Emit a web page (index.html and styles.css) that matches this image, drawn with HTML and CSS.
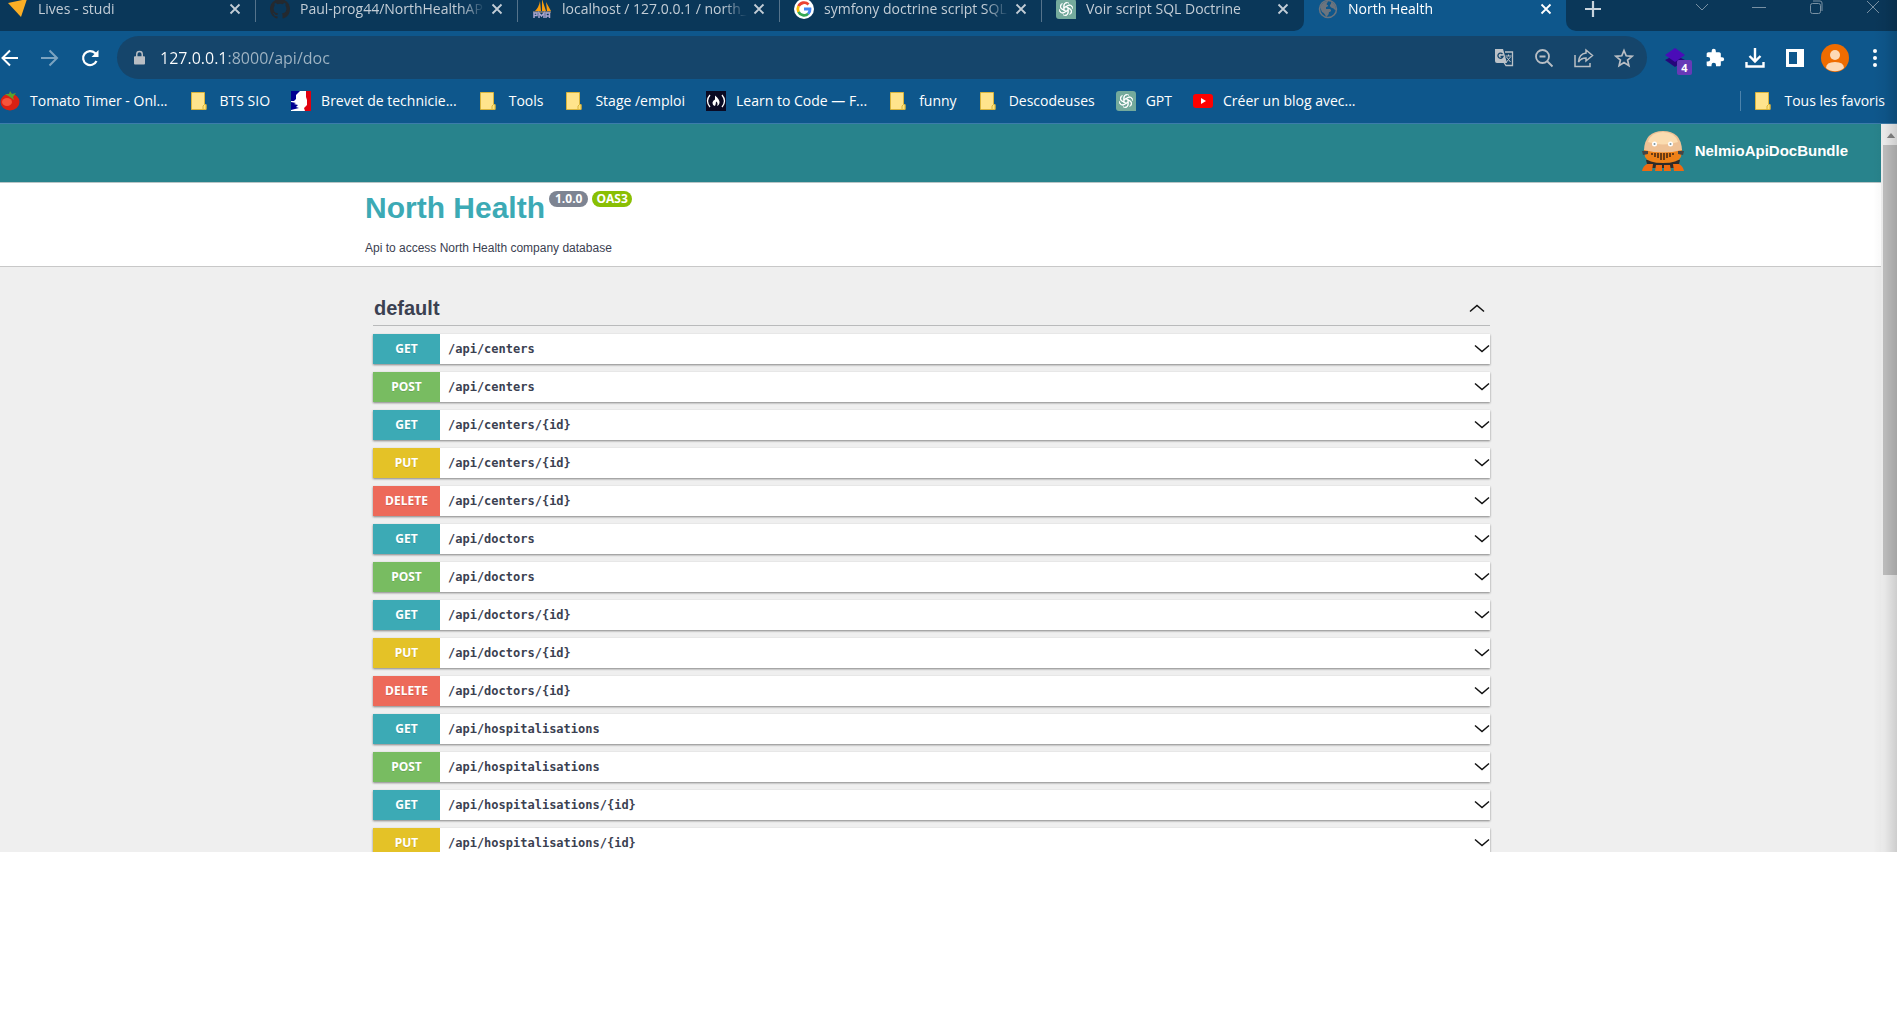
FILE: index.html
```html
<!DOCTYPE html>
<html lang="fr">
<head>
<meta charset="utf-8">
<title>North Health</title>
<link rel="stylesheet" href="styles.css">
</head>
<body>
<svg class="sprite" aria-hidden="true">
  <symbol id="close" viewBox="0 0 12 12"><path d="M1.5 1.5l9 9M10.500 1.500l-9 9" fill="none" stroke="currentColor" stroke-width="1.800"/></symbol>
  <symbol id="folder" viewBox="0 0 20 20"><path d="M2.500 1.500h13v12h1.500v5H2.500z" fill="#ffe48c" stroke="#d9b43c"/><path d="M14 18.500v-3.500l1.500-1.500h1.500v5z" fill="#ffe27a" stroke="#d9b43c"/></symbol>
  <symbol id="gpt" viewBox="0 0 20 20"><path d="M3 0h14a3 3 0 0 1 3 3v17H3a3 3 0 0 1-3-3V3a3 3 0 0 1 3-3z" fill="#74aa9c"/><g fill="none" stroke="#fff" stroke-width="1"><path id="petal" d="M8 11.200V6.500a3 3 0 0 1 5-2.200M8 8.700l3.800-2.200a3 3 0 0 1 4.300 1.500"/><use href="#petal" transform="rotate(60 10 10)"/><use href="#petal" transform="rotate(120 10 10)"/><use href="#petal" transform="rotate(180 10 10)"/><use href="#petal" transform="rotate(240 10 10)"/><use href="#petal" transform="rotate(300 10 10)"/></g></symbol>
  <symbol id="chevron" viewBox="0 0 16 10"><path d="M1 1.500l7 6 7-6" fill="none" stroke="currentColor" stroke-width="1.500"/></symbol>
</svg>
<div class="browser">
  <header class="chrome">
    <div class="tabstrip">
      <div class="tabs">
        <div class="tab"><svg class="favicon" viewBox="0 0 20 20"><path d="M0 4L19 0 13 18z" fill="#fbae25"/></svg><a href="#">Lives - studi</a><button aria-label="Fermer"><svg><use href="#close"/></svg></button></div>
        <div class="tab"><svg class="favicon" viewBox="0 0 16 16"><path fill="#24292f" d="M8 0C3.580 0 0 3.580 0 8c0 3.540 2.290 6.530 5.470 7.590.4.070.55-.17.55-.38v-1.490c-2.010.37-2.530-.49-2.690-.94-.09-.23-.48-.94-.82-1.130-.28-.15-.68-.52-.01-.53.630-.01 1.080.58 1.230.82.720 1.210 1.870.87 2.330.66.070-.52.280-.87.510-1.070-1.780-.2-3.640-.89-3.640-3.950 0-.87.310-1.590.820-2.150-.08-.2-.36-1.020.08-2.120 0 0 .67-.21 2.200.82a7.600 7.600 0 0 1 4 0c1.530-1.040 2.200-.82 2.200-.82.440 1.100.160 1.920.080 2.120.510.560.820 1.270.820 2.150 0 3.070-1.870 3.750-3.650 3.950.290.250.540.730.540 1.480v2.200c0 .210.150.460.550.380A8 8 0 0 0 16 8c0-4.420-3.580-8-8-8z"/></svg><a href="#">Paul-prog44/NorthHealthAP</a><button aria-label="Fermer"><svg><use href="#close"/></svg></button></div>
        <div class="tab"><svg class="favicon" viewBox="0 0 20 20"><path d="M3 12Q7 8 8 2l1 10zM10 0l4 12h-4zM14 3l5 9h-4z" fill="#f89c0e"/><path d="M1 13h18" stroke="#c8a78a"/><path d="M2 19v-5h3v2.500H2M7 19v-5l2.500 3 2.500-3v5M14 19v-5h3.500v5M14 17h3" fill="none" stroke="#a9a5cf" stroke-width="1.500"/></svg><a href="#">localhost / 127.0.0.1 / north_</a><button aria-label="Fermer"><svg><use href="#close"/></svg></button></div>
        <div class="tab"><svg class="favicon" viewBox="0 0 20 20"><circle cx="10" cy="10" r="10" fill="#fff"/><g fill="none" stroke-width="2.800"><path d="M14.500 5.500A6.200 6.200 0 0 0 4.500 7.200" stroke="#ea4335"/><path d="M4.500 7.200a6.200 6.200 0 0 0 0 5.600" stroke="#fbbc05"/><path d="M4.500 12.800a6.200 6.200 0 0 0 9.700 2" stroke="#34a853"/><path d="M14.200 14.800A6 6 0 0 0 16 10h-6" stroke="#4285f4"/></g></svg><a href="#">symfony doctrine script SQL</a><button aria-label="Fermer"><svg><use href="#close"/></svg></button></div>
        <div class="tab"><svg class="favicon"><use href="#gpt"/></svg><a href="#">Voir script SQL Doctrine</a><button aria-label="Fermer"><svg><use href="#close"/></svg></button></div>
      </div>
      <div class="tab active"><svg class="favicon" viewBox="0 0 20 20"><circle cx="10" cy="10" r="8.500" fill="none" stroke="#6b747e" stroke-width="1.500"/><path d="M2 8C4 4 7 2 10 2c0 2-2 2-1 4 2 0 1 2-1 2v2h4c2 1 1 3-1 3 0 3-2 4-3 5-1-3-2-4-4-5zM13 3c3 1 5 4 5 8-2 0-2-2-4-2-2-1-3-3-1-4z" fill="#6b747e"/></svg><a href="#">North Health</a><button aria-label="Fermer"><svg><use href="#close"/></svg></button></div>
      <div class="strip-end">
        <button class="new-tab" aria-label="Nouvel onglet"><svg viewBox="0 0 16 16"><path d="M8 0v16M0 8h16" stroke="currentColor" stroke-width="2.200"/></svg></button>
        <div class="window-controls">
          <button aria-label="Rechercher"><svg viewBox="0 0 14 14"><path d="M1 4l6 6 6-6"/></svg></button>
          <button aria-label="Réduire"><svg viewBox="0 0 14 14"><path d="M0 7.500h14"/></svg></button>
          <button aria-label="Restaurer"><svg viewBox="0 0 14 14"><rect x="1.500" y="3.500" width="10" height="10" rx="2"/><path d="M4 1h7q2 0 2 2v8"/></svg></button>
          <button aria-label="Fermer la fenêtre"><svg viewBox="0 0 14 14"><path d="M1 1l12 12M13 1L1 13"/></svg></button>
        </div>
      </div>
    </div>
    <div class="toolbar">
      <nav class="history">
        <button aria-label="Retour"><svg viewBox="0 0 20 20"><path d="M18 10H3M10 2.500L2.500 10l7.500 7.500" fill="none" stroke="currentColor" stroke-width="2"/></svg></button>
        <button class="dim" aria-label="Avancer"><svg viewBox="0 0 20 20"><path d="M1 10h15M9.500 2.500L17 10l-7.500 7.500" fill="none" stroke="currentColor" stroke-width="2"/></svg></button>
        <button aria-label="Actualiser"><svg viewBox="0 0 20 20"><path d="M16.500 13A7 7 0 1 1 15 5l2 2" fill="none" stroke="currentColor" stroke-width="2.200"/><path d="M18.500 2v7h-7z" fill="currentColor"/></svg></button>
      </nav>
      <div class="omnibox">
        <svg class="lock" viewBox="0 0 12 16"><path d="M3 7V4a3 3 0 0 1 6 0v3" fill="none" stroke="#b9bec4" stroke-width="1.600"/><rect x="0" y="6" width="12" height="9" rx="1" fill="#b9bec4"/></svg>
        <input type="text" aria-label="Adresse" value="127.0.0.1:8000/api/doc">
        <button aria-label="Traduire"><svg viewBox="0 0 20 20"><path d="M1 1h8l4 14H3a2 2 0 0 1-2-2z" fill="#bcc2c8"/><path d="M11 4h7.500v13.500H12l-2-3" fill="none" stroke="#bcc2c8" stroke-width="1.300"/><path d="M8.500 6A2.600 2.600 0 1 0 9 8.500H6.500" fill="none" stroke="#15456b" stroke-width="1.300"/><path d="M11.500 8h6M14.500 6.500V8M12.500 9l4 5M16.500 9l-4 5" fill="none" stroke="#bcc2c8"/></svg></button>
        <button aria-label="Zoom"><svg viewBox="0 0 20 20"><g fill="none" stroke="#b9bec4" stroke-width="1.800"><circle cx="8.500" cy="8.500" r="6.500"/><path d="M13 13l5.500 5.500M5.500 8.500h6"/></g></svg></button>
        <button aria-label="Partager"><svg viewBox="0 0 20 20"><path d="M1 7v11.500h15V15M12 2l6.500 5.500L12 13V10Q7 10 4.500 14 5 6 12 5z" fill="none" stroke="#b9bec4" stroke-width="1.500"/></svg></button>
        <button aria-label="Ajouter aux favoris"><svg viewBox="0 0 20 20"><path d="M10 2.500l2.200 5.300 5.800.5-4.400 3.700 1.300 5.600-4.900-3-4.900 3 1.300-5.600L2 8.300l5.800-.5z" fill="none" stroke="#b9bec4" stroke-width="1.700"/></svg></button>
      </div>
      <div class="actions">
        <button class="extension" aria-label="Extension"><svg viewBox="0 0 20 20"><path d="M0 12l10-5 10 5-10 7z" fill="#25067a"/><path d="M0 7l10-7 10 7-10 7z" fill="#4a0cb8"/></svg><span class="count">4</span></button>
        <button aria-label="Extensions"><svg viewBox="0 0 24 24"><path fill="#fff" d="M20.500 11H19V7c0-1.100-.9-2-2-2h-4V3.500a2.500 2.500 0 0 0-5 0V5H4c-1.100 0-2 .9-2 2v3.800h1.500a2.700 2.700 0 0 1 0 5.400H2V20c0 1.100.9 2 2 2h3.800v-1.500a2.700 2.700 0 0 1 5.400 0V22H17c1.100 0 2-.9 2-2v-4h1.500a2.500 2.500 0 0 0 0-5z"/></svg></button>
        <button aria-label="Téléchargements"><svg viewBox="0 0 20 20"><path d="M10 0v13M4.500 8l5.500 5.500L15.500 8M1.500 14v4.500h17V14" fill="none" stroke="#fff" stroke-width="2.400"/></svg></button>
        <button aria-label="Panneau latéral"><svg viewBox="0 0 20 20"><path d="M1 1h18v18H1zM4 4v12h8V4z" fill="#fff" fill-rule="evenodd"/></svg></button>
        <button aria-label="Profil"><svg class="avatar" viewBox="0 0 28 28"><circle cx="14" cy="14" r="14" fill="#ef6c00"/><circle cx="14" cy="11" r="5" fill="#fdd9b5"/><path d="M5 24q0-6 9-6t9 6a14 14 0 0 1-18 0z" fill="#fdd9b5"/></svg></button>
        <button aria-label="Menu"><svg viewBox="0 0 20 20"><g fill="#fff"><circle cx="10" cy="3" r="2"/><circle cx="10" cy="10" r="2"/><circle cx="10" cy="17" r="2"/></g></svg></button>
      </div>
    </div>
    <nav class="bookmarks">
      <a href="#"><svg viewBox="0 0 20 20"><ellipse cx="10" cy="11" rx="9.500" ry="8.500" fill="#d92113"/><ellipse cx="7" cy="11" rx="5" ry="4" fill="#f5543c"/><path d="M10 6L5 3l4 0 1-3 2 3 4-1-3 4 1 3z" fill="#58a32e"/></svg>Tomato Timer - Onl...</a>
      <a class="folder" href="#"><svg><use href="#folder"/></svg>BTS SIO</a>
      <a href="#"><svg viewBox="0 0 20 20"><path d="M0 0h20v20H0z" fill="#fff"/><path d="M0 0h9L5 4v4l-2 2H0zM0 11l5 1-2 1 4 1-2 2 3 1-8 2z" fill="#000091"/><path d="M15 0h5v20h-6l-1-3 3-3V9l-1-3z" fill="#e1000f"/></svg>Brevet de technicie...</a>
      <a class="folder" href="#"><svg><use href="#folder"/></svg>Tools</a>
      <a class="folder" href="#"><svg><use href="#folder"/></svg>Stage /emploi</a>
      <a href="#"><svg viewBox="0 0 20 20"><path d="M0 0h20v20H0z" fill="#0a0a23"/><path d="M4 4q-5 6 0 12M16 4q5 6 0 12" fill="none" stroke="#fff" stroke-width="1.300"/><path d="M9 4.500q5 4 4.500 7.500-.5 2.500-2.500 3 1.500-3-1-4.500 0 2-1 4.500-2.500-.5-2.500-3.500.5-2 2.500-3z" fill="#fff"/></svg>Learn to Code — F...</a>
      <a class="folder" href="#"><svg><use href="#folder"/></svg>funny</a>
      <a class="folder" href="#"><svg><use href="#folder"/></svg>Descodeuses</a>
      <a href="#"><svg><use href="#gpt"/></svg>GPT</a>
      <a href="#"><svg viewBox="0 0 20 20"><rect y="3" width="20" height="14" rx="3" fill="#f00"/><path d="M8 7l5 3-5 3z" fill="#fff"/></svg>Créer un blog avec...</a>
      <a class="folder all" href="#"><svg><use href="#folder"/></svg>Tous les favoris</a>
    </nav>
  </header>

  <div class="viewport">
    <main class="page">
      <div class="brand">
        <a href="#"><svg viewBox="0 0 42 40"><path d="M4 29h34l-2 8H6z" fill="#2f2b29"/><path d="M5 33h6l-1 7H0q1-5 5-7zM14 34h6v6h-7zM22 34h6l1 6h-7zM31 33h6q4 2 5 7H32z" fill="#ef6a10"/><path d="M2 18h38l-1 8q-3 6-18 6T3 26z" fill="#ee8118"/><path d="M2 19Q3 0 21 0t19 19q-19 5-38 0z" fill="#eec195"/><path d="M6 11Q9 1 21 1t15 10q-15 5-30 0z" fill="#fbdcb0"/><circle cx="12.500" cy="13" r="2.500" fill="#fff"/><circle cx="28.500" cy="13" r="2.500" fill="#fff"/><circle cx="12.500" cy="13" r="1" fill="#7c98a1"/><circle cx="28.500" cy="13" r="1" fill="#7c98a1"/><path d="M10 22v2M13 22v4M16 22v5M19 22v7M22 22v7M25 22v5M28 22v4M31 22v2" stroke="#5d3514" stroke-width="1.800"/><path d="M0 20h6v3l-5 1zM42 20h-6v3l5 1z" fill="#454545"/></svg>NelmioApiDocBundle</a>
      </div>
      <section class="info">
        <div class="wrapper">
          <h1>North Health <small>1.0.0</small><small class="oas">OAS3</small></h1>
          <p>Api to access North Health company database</p>
        </div>
      </section>
      <section class="wrapper operations">
        <h2>default <button aria-label="Replier"><svg class="up"><use href="#chevron"/></svg></button></h2>
        <ul>
          <li><button class="op get"><b>GET</b><code>/api/centers</code><svg><use href="#chevron"/></svg></button></li>
          <li><button class="op post"><b>POST</b><code>/api/centers</code><svg><use href="#chevron"/></svg></button></li>
          <li><button class="op get"><b>GET</b><code>/api/centers/{id}</code><svg><use href="#chevron"/></svg></button></li>
          <li><button class="op put"><b>PUT</b><code>/api/centers/{id}</code><svg><use href="#chevron"/></svg></button></li>
          <li><button class="op delete"><b>DELETE</b><code>/api/centers/{id}</code><svg><use href="#chevron"/></svg></button></li>
          <li><button class="op get"><b>GET</b><code>/api/doctors</code><svg><use href="#chevron"/></svg></button></li>
          <li><button class="op post"><b>POST</b><code>/api/doctors</code><svg><use href="#chevron"/></svg></button></li>
          <li><button class="op get"><b>GET</b><code>/api/doctors/{id}</code><svg><use href="#chevron"/></svg></button></li>
          <li><button class="op put"><b>PUT</b><code>/api/doctors/{id}</code><svg><use href="#chevron"/></svg></button></li>
          <li><button class="op delete"><b>DELETE</b><code>/api/doctors/{id}</code><svg><use href="#chevron"/></svg></button></li>
          <li><button class="op get"><b>GET</b><code>/api/hospitalisations</code><svg><use href="#chevron"/></svg></button></li>
          <li><button class="op post"><b>POST</b><code>/api/hospitalisations</code><svg><use href="#chevron"/></svg></button></li>
          <li><button class="op get"><b>GET</b><code>/api/hospitalisations/{id}</code><svg><use href="#chevron"/></svg></button></li>
          <li><button class="op put"><b>PUT</b><code>/api/hospitalisations/{id}</code><svg><use href="#chevron"/></svg></button></li>
        </ul>
      </section>
    </main>
    <div class="scrollbar" aria-hidden="true">
      <svg viewBox="0 0 10 6"><path d="M0 6l5-6 5 6z" fill="#868686"/></svg>
      <div class="thumb"></div>
    </div>
  </div>
</div>
</body>
</html>
```
FILE: styles.css
```css
* { box-sizing: border-box; }
body { margin: 0; background: #fff; font-family: "Open Sans", "Noto Sans", sans-serif; }
button { margin: 0; padding: 0; border: 0; background: none; color: inherit; font: inherit; display: flex; align-items: center; justify-content: center; cursor: pointer; }
a { color: inherit; text-decoration: none; }
svg { display: block; flex: none; }
.sprite { position: absolute; width: 0; height: 0; }

.browser { position: relative; display: flex; flex-direction: column; height: calc(100vh - 158px); overflow: hidden; }
/* soft shade along the right edge of the window */
.browser::after { content: ""; position: absolute; top: 0; right: 0; bottom: 0; width: 24px; background: linear-gradient(90deg, transparent, rgba(0, 0, 0, .04) 50%, rgba(0, 0, 0, .15)); pointer-events: none; }
.chrome { flex: none; background: #0e578c; color: #fff; border-bottom: 1px solid #3c7cab; }

.tabstrip { display: flex; height: 31px; font-size: 14px; line-height: 18px; overflow: hidden; }
.tabs { display: flex; margin-left: -6px; background: #0a3759; color: #c3cdd6; border-radius: 0 0 10px 0; }
.tab { display: flex; align-items: center; width: 262px; height: 18px; padding: 0 8px 0 14px; }
.tabs .tab { height: 22px; padding-bottom: 4px; border-right: 1px solid #55738b; }
.tabs .tab:last-child { border-right-color: transparent; }
.favicon { width: 20px; height: 20px; margin-right: 10px; }
.tab a { flex: 1; min-width: 0; overflow: hidden; white-space: nowrap; -webkit-mask-image: linear-gradient(90deg, #000 calc(100% - 24px), transparent); mask-image: linear-gradient(90deg, #000 calc(100% - 24px), transparent); }
.tab button { width: 24px; }
.tab button svg { width: 12px; height: 12px; }
.strip-end { flex: 1; display: flex; justify-content: space-between; background: #0a3759; border-radius: 0 0 0 10px; }
.new-tab { width: 54px; height: 18px; color: #c8d3dc; }
.new-tab svg { width: 16px; height: 16px; }
.window-controls { display: flex; gap: 9px; height: 13px; }
.window-controls button { width: 48px; }
.window-controls svg { width: 14px; height: 14px; fill: none; stroke: #7890a3; }

.toolbar { display: flex; align-items: center; padding: 5px 2px 0 0; }
.history { display: flex; gap: 20px; margin-right: 17px; }
.history svg { width: 20px; height: 20px; }
.dim { opacity: .45; }
.omnibox { flex: 1; display: flex; align-items: center; height: 43px; padding: 0 3px 0 17px; border-radius: 22px; background: #15456b; }
.omnibox .lock { width: 11px; height: 16px; margin-right: 15px; }
.omnibox input { flex: 1; min-width: 0; height: 28px; padding: 0; border: 0; outline: 0; font: 16px/28px "Open Sans", "Noto Sans", sans-serif; color: transparent; background: linear-gradient(90deg, #fff 67px, #a1b5c4 67px); -webkit-background-clip: text; background-clip: text; }
.omnibox button, .actions button { width: 40px; height: 40px; }
.omnibox button svg { width: 20px; height: 20px; }
.actions { display: flex; margin-left: 8px; }
.actions svg { width: 20px; height: 20px; }
.actions .avatar { width: 28px; height: 28px; }
.extension { position: relative; }
.count { position: absolute; right: 3px; bottom: 3px; width: 15px; height: 15px; border-radius: 2px; background: #673ab7; font: bold 11px/15px "Open Sans", sans-serif; }

.bookmarks { display: flex; align-items: center; gap: 21px; height: 44px; font-size: 14px; line-height: 20px; white-space: nowrap; }
.bookmarks a { display: flex; align-items: center; gap: 10px; }
.bookmarks .folder { gap: 11px; }
.bookmarks svg { width: 20px; height: 20px; }
.bookmarks .all { margin-left: auto; margin-right: 12px; padding-left: 12px; border-left: 1px solid #4c83ac; }

.viewport { flex: 1; min-height: 0; display: flex; }
.page { flex: 1; min-width: 0; overflow: hidden; background: #efefef; color: #3b4151; font-family: "Liberation Sans", Arial, sans-serif; }
.brand { display: flex; justify-content: flex-end; height: 59px; padding: 7px 33px 0 0; background: #28838c; border-bottom: 1px solid #b9c5c6; }
.brand a { display: flex; gap: 11px; height: 40px; color: #fff; font: bold 15px/40px "Liberation Sans", Arial, sans-serif; }
.brand svg { width: 42px; height: 40px; }
.wrapper { max-width: 1151px; margin: 0 auto; }
.info { padding: 8px 0 9px; background: #fff; border-bottom: 1px solid #c8c8c8; }
h1 { display: flex; align-items: flex-start; margin: 0; font-size: 30px; line-height: 34px; color: #3caab5; }
small { margin-left: 4px; padding: 0 6px; height: 16px; border-radius: 8px; background: #7d8492; color: #fff; font: bold 12px/16px "Open Sans", sans-serif; }
small.oas { padding: 0 4px; background: #89bf04; }
.info p { margin: 15px 0 0; font-size: 12px; line-height: 17px; }
.operations { padding: 26px 26px 0 8px; }
h2 { display: flex; align-items: center; justify-content: space-between; height: 33px; margin: 0 0 8px; padding: 0 5px 3px 1px; border-bottom: 1px solid #b9babb; font-size: 20px; line-height: 28px; }
h2 svg, .op svg { width: 16px; height: 10px; color: #111; }
.up { transform: rotate(180deg); }
ul { display: flex; flex-direction: column; gap: 8px; margin: 0; padding: 0; list-style: none; }
.op { width: 100%; height: 30px; background: #fff; box-shadow: 0 1px 2px rgba(0, 0, 0, .45); }
.op b { width: 67px; line-height: 30px; color: #fff; font-family: "Open Sans", sans-serif; font-size: 12px; text-shadow: 0 1px 0 rgba(0, 0, 0, .12); }
.op code { flex: 1; padding-left: 8px; text-align: left; font: bold 12px/30px "DejaVu Sans Mono", monospace; color: #3b4151; }
.get b { background: #3caab5; }
.post b { background: #78bc61; }
.put b { background: #e4c227; }
.delete b { background: #ed6a5a; }

.scrollbar { display: flex; flex-direction: column; align-items: flex-end; width: 16px; background: #f1f1f1; }
.scrollbar svg { width: 10px; height: 5px; margin: 9px 1px 7px 0; }
.thumb { width: 14px; height: 59%; background: #c1c1c1; }
```
